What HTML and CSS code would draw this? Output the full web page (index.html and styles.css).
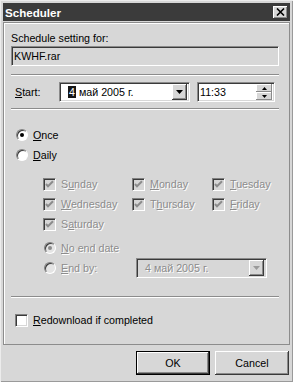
FILE: index.html
```html
<html lang="en">
<head>
  <meta charset="UTF-8">
  <title>Scheduler</title>
  <link rel="stylesheet" href="styles.css">
</head>
<body>
  <div class="window">
    <div class="titlebar">
      <span class="title">Scheduler</span>
      <span class="close">
        <svg width="9" height="8" viewBox="0 0 9 8"><path d="M1 0.5 L8 7.5 M8 0.5 L1 7.5" stroke="#000" stroke-width="1.6"/></svg>
      </span>
    </div>

    <div class="panel">
      <div class="label">Schedule setting for:</div>
      <div class="field readonly">KWHF.rar</div>

      <div class="sep first"></div>

      <div class="start-row">
        <span class="start-label"><u>S</u>tart:</span>
        <div class="combo date">
          <span class="combo-text"><span class="sel">4</span> май 2005 г.</span>
          <span class="drop"><svg width="7" height="4" viewBox="0 0 7 4"><path d="M0 0 H7 L3.5 4 Z" fill="#000"/></svg></span>
        </div>
        <div class="time">
          <span class="time-text">11:33</span>
          <span class="spin">
            <span class="spin-btn"><svg width="5" height="3" viewBox="0 0 5 3"><path d="M0 3 H5 L2.5 0 Z" fill="#000"/></svg></span>
            <span class="spin-btn"><svg width="5" height="3" viewBox="0 0 5 3"><path d="M0 0 H5 L2.5 3 Z" fill="#000"/></svg></span>
          </span>
        </div>
      </div>

      <div class="sep second"></div>

      <div class="opt once"><span class="radio"><span class="dot"></span></span><span class="text"><u>O</u>nce</span></div>
      <div class="opt daily"><span class="radio"></span><span class="text"><u>D</u>aily</span></div>

      <div class="days">
        <div class="opt"><span class="check off"><svg width="9" height="9" viewBox="0 0 9 9"><path d="M1 4 L3 6.3 L8 1.3" stroke="#8c8c8c" stroke-width="2" fill="none"/></svg></span><span class="text muted">S<u>u</u>nday</span></div>
        <div class="opt"><span class="check off"><svg width="9" height="9" viewBox="0 0 9 9"><path d="M1 4 L3 6.3 L8 1.3" stroke="#8c8c8c" stroke-width="2" fill="none"/></svg></span><span class="text muted"><u>M</u>onday</span></div>
        <div class="opt"><span class="check off"><svg width="9" height="9" viewBox="0 0 9 9"><path d="M1 4 L3 6.3 L8 1.3" stroke="#8c8c8c" stroke-width="2" fill="none"/></svg></span><span class="text muted"><u>T</u>uesday</span></div>
        <div class="opt"><span class="check off"><svg width="9" height="9" viewBox="0 0 9 9"><path d="M1 4 L3 6.3 L8 1.3" stroke="#8c8c8c" stroke-width="2" fill="none"/></svg></span><span class="text muted"><u>W</u>ednesday</span></div>
        <div class="opt"><span class="check off"><svg width="9" height="9" viewBox="0 0 9 9"><path d="M1 4 L3 6.3 L8 1.3" stroke="#8c8c8c" stroke-width="2" fill="none"/></svg></span><span class="text muted">T<u>h</u>ursday</span></div>
        <div class="opt"><span class="check off"><svg width="9" height="9" viewBox="0 0 9 9"><path d="M1 4 L3 6.3 L8 1.3" stroke="#8c8c8c" stroke-width="2" fill="none"/></svg></span><span class="text muted"><u>F</u>riday</span></div>
        <div class="opt"><span class="check off"><svg width="9" height="9" viewBox="0 0 9 9"><path d="M1 4 L3 6.3 L8 1.3" stroke="#8c8c8c" stroke-width="2" fill="none"/></svg></span><span class="text muted">S<u>a</u>turday</span></div>
      </div>

      <div class="opt no-end"><span class="radio off"><span class="dot grey"></span></span><span class="text muted"><u>N</u>o end date</span></div>
      <div class="opt end-by">
        <span class="radio off"></span><span class="text muted end-label"><u>E</u>nd by:</span>
        <div class="combo disabled">
          <span class="combo-text muted">4 май 2005 г.</span>
          <span class="drop"><svg width="7" height="4" viewBox="0 0 7 4"><path d="M0 0 H7 L3.5 4 Z" fill="#9a9a9a"/></svg></span>
        </div>
      </div>

      <div class="sep third"></div>

      <div class="opt redownload"><span class="check"></span><span class="text"><u>R</u>edownload if completed</span></div>
    </div>

    <div class="buttons">
      <span class="btn default">OK</span>
      <span class="btn">Cancel</span>
    </div>
  </div>
</body>
</html>
```

FILE: styles.css
```css
body {
  margin: 0;
  background: #d7d7d7;
  font-family: "Liberation Sans", Arial, sans-serif;
  font-size: 10.7px;
  color: #000;
}

.window {
  width: 293px;
  height: 382px;
  box-sizing: border-box;
  padding: 3px;
  background: #d7d7d7;
  box-shadow: inset 1px 1px #ececec, inset -1px -1px #9a9a9a;
}

.titlebar {
  height: 18px;
  background: #3b3b3b;
  display: flex;
  align-items: center;
  justify-content: space-between;
  padding: 0 2px;
}
.title { color: #fff; font-weight: bold; font-size: 11.6px; }
.close {
  width: 15px; height: 13px;
  box-sizing: border-box;
  background: #d7d7d7;
  box-shadow: inset -1px -1px #3a3a3a, inset 1px 1px #fff, inset -2px -2px #8a8a8a;
  display: flex; align-items: center; justify-content: center;
  padding: 0 1px 1px 0;
}

.panel {
  height: 323px;
  margin-top: 1px;
  box-sizing: border-box;
  border: 1px solid #8c8c8c;
  box-shadow: inset 1px 1px #fff;
  padding: 9px 10px 0 7px;
}

.label { line-height: 13px; }

.field {
  height: 20px;
  margin-top: 1px;
  box-sizing: border-box;
  border: 1px solid;
  border-color: #8a8a8a #fff #fff #8a8a8a;
  box-shadow: inset 1px 1px #3a3a3a, inset -1px -1px #d7d7d7;
  padding-left: 2px;
  line-height: 18px;
}

.sep {
  border-top: 1px solid #8c8c8c;
  border-bottom: 1px solid #fff;
}
.sep.first { margin-top: 8px; }
.sep.second { margin-top: 6px; }
.sep.third { margin-top: 18px; }

.start-row {
  display: flex;
  align-items: center;
  height: 20px;
  margin-top: 6px;
}
.start-label { width: 48px; padding-left: 4px; box-sizing: border-box; }

.combo, .time {
  height: 20px;
  box-sizing: border-box;
  border: 1px solid;
  border-color: #8a8a8a #fff #fff #8a8a8a;
  box-shadow: inset 1px 1px #3a3a3a, inset -1px -1px #d7d7d7;
  background: #fff;
  display: flex;
  align-items: center;
  padding: 2px 2px 2px 0;
}
.combo { width: 131px; }
.combo-text { flex: 1; padding-left: 8px; }
.sel { background: #161616; color: #fff; padding: 0 1px; }
.combo.disabled { background: #d7d7d7; }

.drop {
  width: 15px;
  height: 16px;
  box-sizing: border-box;
  background: #d7d7d7;
  box-shadow: inset -1px -1px #3a3a3a, inset 1px 1px #fff, inset -2px -2px #8a8a8a;
  display: flex; align-items: center; justify-content: center;
  padding: 0 1px 1px 0;
}

.time { width: 78px; margin-left: 7px; }
.time-text { flex: 1; padding-left: 2px; }
.spin { display: flex; flex-direction: column; width: 16px; height: 16px; }
.spin-btn {
  flex: 1;
  background: #d7d7d7;
  box-shadow: inset -1px -1px #8a8a8a, inset 1px 1px #fff;
  display: flex; align-items: center; justify-content: center;
}

.opt { display: flex; align-items: center; height: 16px; }
.once { margin-top: 17px; padding-left: 5px; }
.daily { margin-top: 4px; padding-left: 5px; }

.radio {
  width: 12px; height: 12px;
  box-sizing: border-box;
  border-radius: 50%;
  border: 1px solid;
  border-color: #808080 #fff #fff #808080;
  box-shadow: inset 1px 1px #3a3a3a;
  background: #fff;
  display: flex; align-items: center; justify-content: center;
  margin-right: 5px;
}
.radio.off { background: #e4e4e4; }
.dot { width: 4px; height: 4px; border-radius: 50%; background: #000; }
.dot.grey { background: #8c8c8c; }

.check {
  width: 13px; height: 13px;
  box-sizing: border-box;
  border: 1px solid;
  border-color: #808080 #fff #fff #808080;
  box-shadow: inset 1px 1px #3a3a3a, inset -1px -1px #d7d7d7;
  background: #fff;
  display: flex; align-items: center; justify-content: center;
  margin-right: 5px;
}
.check.off { background: #d7d7d7; }

.muted { color: #8c8c8c; text-shadow: 1px 1px #fff; }

.days {
  display: grid;
  grid-template-columns: 89px 80px auto;
  row-gap: 4px;
  margin-top: 13px;
  padding-left: 32px;
}

.no-end { margin-top: 8px; padding-left: 33px; }
.end-by { margin-top: 2px; height: 20px; padding-left: 33px; }
.end-label { width: 75px; }

.redownload { margin-top: 14px; padding-left: 4px; }

.buttons {
  display: flex;
  justify-content: flex-end;
  gap: 5px;
  margin-top: 6px;
  padding-right: 1px;
}
.btn {
  width: 74px; height: 24px;
  box-sizing: border-box;
  background: #d7d7d7;
  box-shadow: inset -1px -1px #3a3a3a, inset 1px 1px #fff, inset -2px -2px #8a8a8a;
  display: flex; align-items: center; justify-content: center;
}
.btn.default {
  border: 1px solid #000;
}
```
